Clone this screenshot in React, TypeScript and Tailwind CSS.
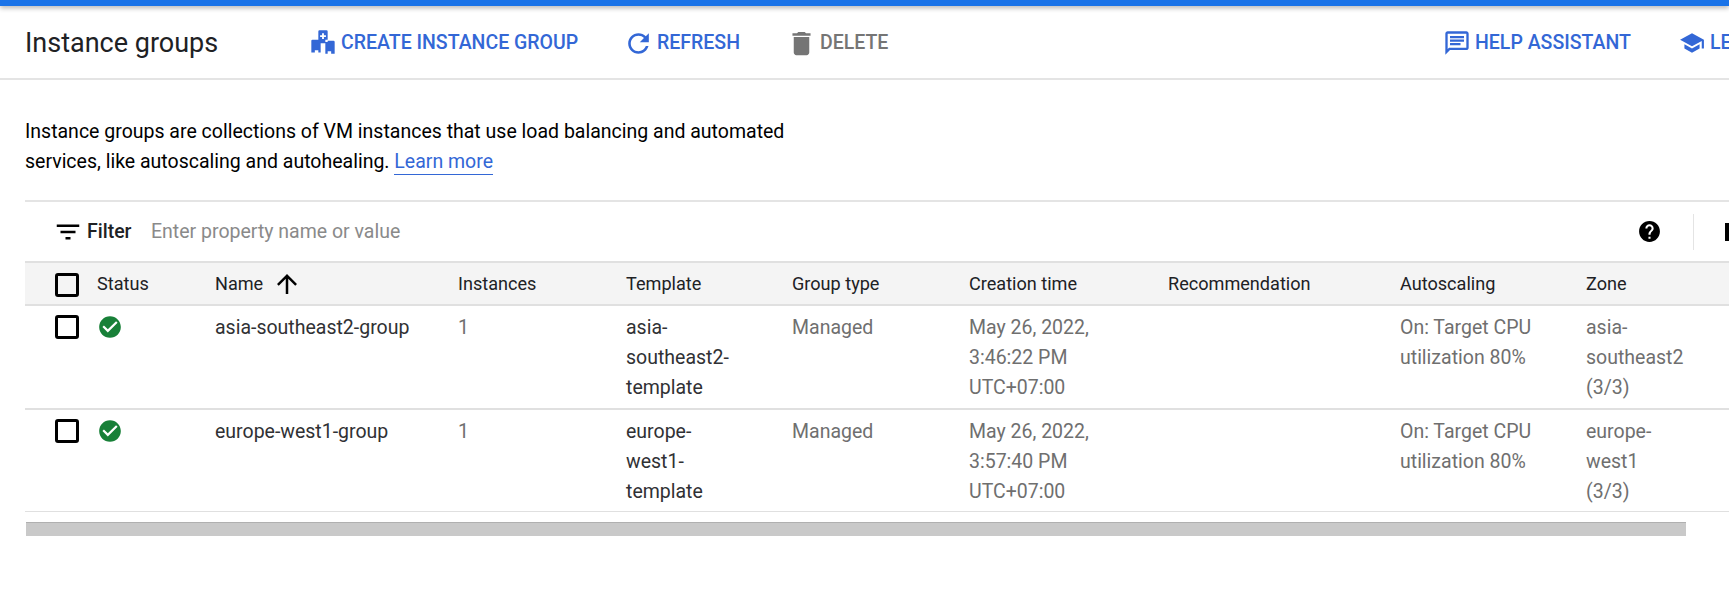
const P = {
  refresh: "M17.65 6.35C16.2 4.9 14.21 4 12 4c-4.42 0-7.99 3.58-7.99 8s3.57 8 7.99 8c3.73 0 6.84-2.55 7.73-6h-2.08c-.82 2.33-3.04 4-5.65 4-3.31 0-6-2.69-6-6s2.69-6 6-6c1.66 0 3.14.69 4.22 1.78L13 11h7V4l-2.35 2.35z",
  del: "M6 19c0 1.1.9 2 2 2h8c1.1 0 2-.9 2-2V7H6v12zM19 4h-3.5l-1-1h-5l-1 1H5v2h14V4z",
  school: "M5 13.18v4L12 21l7-3.82v-4L12 17l-7-3.82zM12 3L1 9l11 6 9-4.91V17h2V9L12 3z",
  help: "M12 2C6.48 2 2 6.48 2 12s4.48 10 10 10 10-4.48 10-10S17.52 2 12 2zm1 17h-2v-2h2v2zm2.07-7.75l-.9.92C13.45 12.9 13 13.5 13 15h-2v-.5c0-1.1.45-2.1 1.17-2.83l1.24-1.26c.37-.36.59-.86.59-1.41 0-1.1-.9-2-2-2s-2 .9-2 2H8c0-2.21 1.79-4 4-4s4 1.79 4 4c0 .88-.36 1.68-.93 2.25z",
  filter: "M10 18h4v-2h-4v2zM3 6v2h18V6H3zm3 7h12v-2H6v2z",
  up: "M4 12l1.41 1.41L11 7.83V20h2V7.83l5.58 5.59L20 12l-8-8-8 8z",
  ok: "M12 2C6.48 2 2 6.48 2 12s4.48 10 10 10 10-4.48 10-10S17.52 2 12 2zm-2 15l-5-5 1.41-1.41L10 14.17l7.59-7.59L19 8l-9 9z",
  chat: "M20 2H4c-1.1 0-2 .9-2 2v18l4-4h14c1.1 0 2-.9 2-2V4c0-1.1-.9-2-2-2zm0 14H5.17L4 17.17V4h16v12zM6 12h9v2H6v-2zm0-3h12v2H6V9zm0-3h12v2H6V6z",
  create: "M9 2h6a1 1 0 0 1 1 1v7h-2v2h2v-1h5a1 1 0 0 1 1 1v10h-3v-2h-3v2h-2V13h-4v8H8v-2H5v2H2V11a1 1 0 0 1 1-1h5V3a1 1 0 0 1 1-1zm2.2 2.6v1.7H9.5v1.4h1.7v1.7h1.6V7.7h1.7V6.3h-1.7V4.6h-1.6z",
};

function Ic({ d, className }: { d: string; className: string }) {
  return (
    <svg viewBox="0 0 24 24" fill="currentColor" className={className}>
      <path d={d} fillRule="evenodd" />
    </svg>
  );
}

function Box() {
  return <div className="w-[24px] h-[24px] border-[3px] border-black rounded-[3px]" />;
}

function ToolBtn({ d, label, cls, iconCls }: { d: string; label: string; cls: string; iconCls: string }) {
  return (
    <div className={`flex items-center shrink-0 whitespace-nowrap ${cls}`}>
      <Ic d={d} className={iconCls} />
      <span className="text-[19.5px] font-medium">{label}</span>
    </div>
  );
}

const rows = [
  {
    name: "asia-southeast2-group",
    tpl: ["asia-", "southeast2-", "template"],
    time: "3:46:22 PM",
    zone: ["asia-", "southeast2", "(3/3)"],
    h: "h-[104px]",
    border: "border-b-2 border-[#e0e0e0]",
  },
  {
    name: "europe-west1-group",
    tpl: ["europe-", "west1-", "template"],
    time: "3:57:40 PM",
    zone: ["europe-", "west1", "(3/3)"],
    h: "h-[102px]",
    border: "border-b border-[#e0e0e0]",
  },
];

const Lines = ({ items }: { items: string[] }) => (
  <>
    {items.map((t) => (
      <div key={t}>{t}</div>
    ))}
  </>
);

export default function App() {
  return (
    <div className="w-[1729px] h-[598px] overflow-hidden bg-white font-['Roboto',sans-serif] text-[#202124]">
      <div className="h-[6px] bg-[#1a73e8] shadow-[0_2px_5px_rgba(0,0,0,0.3)] relative" />
      <div className="h-[74px] pt-[2px] border-b-2 border-[#e4e4e4] flex items-center pl-[25px] overflow-hidden">
        <div className="w-[284px] shrink-0 text-[27px] whitespace-nowrap leading-none">Instance groups</div>
        <ToolBtn d={P.create} label="CREATE INSTANCE GROUP" cls="text-[#3367d6] w-[314px]" iconCls="w-[28px] h-[28px] mr-[4px] -mt-[2px]" />
        <ToolBtn d={P.refresh} label="REFRESH" cls="text-[#3367d6] w-[163px]" iconCls="w-[31px] h-[31px] mr-[3px]" />
        <ToolBtn d={P.del} label="DELETE" cls="text-[#757575] w-[657px]" iconCls="w-[31px] h-[31px] mr-[3px]" />
        <ToolBtn d={P.chat} label="HELP ASSISTANT" cls="text-[#3367d6] w-[236px]" iconCls="w-[28px] h-[28px] mr-[4px]" />
        <ToolBtn d={P.school} label="LEARN" cls="text-[#3367d6]" iconCls="w-[26px] h-[26px] mr-[5px]" />
      </div>

      <div className="pl-[25px] pt-[37px] text-[19.5px] leading-[30px] text-[#000000] h-[120px]">
        <div>Instance groups are collections of VM instances that use load balancing and automated</div>
        <div>
          services, like autoscaling and autohealing.{" "}
          <span className="text-[#3367d6] border-b border-[#3367d6] pb-[1px]">Learn more</span>
        </div>
      </div>

      <div className="ml-[25px] border-t-2 border-[#e4e4e4] h-[61px] flex items-center overflow-hidden">
        <Ic d={P.filter} className="w-[30px] h-[30px] ml-[28px] text-[#000] shrink-0" />
        <span className="ml-[4px] w-[44px] text-[19.5px] font-medium shrink-0">Filter</span>
        <span className="ml-[20px] text-[19.5px] text-[#8a8a8a] w-[1460px] shrink-0">Enter property name or value</span>
        <Ic d={P.help} className="w-[25px] h-[25px] text-black shrink-0 ml-[26px]" />
        <div className="ml-[31px] w-px h-[36px] bg-[#e4e4e4] shrink-0" />
        <div className="ml-[31px] w-[6px] h-[18px] bg-black shrink-0" />
      </div>

      <div className="ml-[25px] w-[1704px]">
        <div className="h-[45px] bg-[#f4f4f4] border-y-2 border-[#e0e0e0] flex items-center text-[18.1px] font-normal text-[#202124] whitespace-nowrap [&>div]:shrink-0">
          <div className="w-[72px] pl-[30px] pt-[2px]"><Box /></div>
          <div className="w-[118px]">Status</div>
          <div className="w-[243px] flex items-center">
            Name
            <Ic d={P.up} className="w-[30px] h-[30px] ml-[9px] text-black" />
          </div>
          <div className="w-[168px]">Instances</div>
          <div className="w-[166px]">Template</div>
          <div className="w-[177px]">Group type</div>
          <div className="w-[199px]">Creation time</div>
          <div className="w-[232px]">Recommendation</div>
          <div className="w-[186px]">Autoscaling</div>
          <div className="w-[143px]">Zone</div>
        </div>
        {rows.map((r) => (
          <div key={r.name} className={`${r.h} ${r.border} flex pt-[7px] text-[19.5px] leading-[30px] text-[#6f6f6f] [&>div]:shrink-0`}>
            <div className="w-[72px] pl-[30px] pt-[2px]"><Box /></div>
            <div className="w-[118px] pt-[1px]"><Ic d={P.ok} className="w-[26px] h-[26px] text-[#188038]" /></div>
            <div className="w-[243px] text-[#303134]">{r.name}</div>
            <div className="w-[168px]">1</div>
            <div className="w-[166px] text-[#303134]"><Lines items={r.tpl} /></div>
            <div className="w-[177px]">Managed</div>
            <div className="w-[199px]"><Lines items={["May 26, 2022,", r.time, "UTC+07:00"]} /></div>
            <div className="w-[232px]" />
            <div className="w-[186px]"><Lines items={["On: Target CPU", "utilization 80%"]} /></div>
            <div className="w-[143px]"><Lines items={r.zone} /></div>
          </div>
        ))}
        <div className="ml-px mt-[10px] w-[1660px] h-[14px] bg-[#c9c9c9] border-t border-[#b0b0b0]" />
      </div>
    </div>
  );
}
